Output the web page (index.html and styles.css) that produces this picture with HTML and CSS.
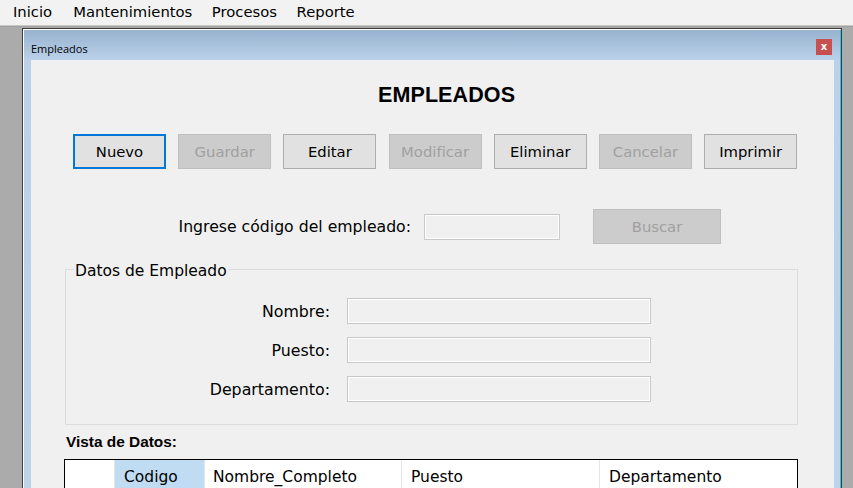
FILE: index.html
```html
<!DOCTYPE html>
<html lang="es">
<head>
<meta charset="utf-8">
<title>Empleados</title>
<link rel="stylesheet" href="styles.css">
</head>
<body>
<div class="menubar">
  <span class="menu-item m1">Inicio</span>
  <span class="menu-item m2">Mantenimientos</span>
  <span class="menu-item m3">Procesos</span>
  <span class="menu-item m4">Reporte</span>
</div>
<div class="mdi">
  <div class="window">
    <div class="frame">
      <div class="titlebar">
        <span class="title-text">Empleados</span>
        <span class="close-btn">x</span>
      </div>
      <div class="client">
        <h1 class="form-title">EMPLEADOS</h1>
        <div class="toolbar">
          <button class="btn btn-focus">Nuevo</button>
          <button class="btn btn-disabled">Guardar</button>
          <button class="btn">Editar</button>
          <button class="btn btn-disabled">Modificar</button>
          <button class="btn">Eliminar</button>
          <button class="btn btn-disabled">Cancelar</button>
          <button class="btn">Imprimir</button>
        </div>
        <div class="search-row">
          <span class="search-label">Ingrese código del empleado:</span>
          <span class="textbox search-box"></span>
          <button class="btn btn-disabled btn-search">Buscar</button>
        </div>
        <fieldset class="group">
          <legend class="group-legend">Datos de Empleado</legend>
          <div class="form-grid">
            <span class="field-label">Nombre:</span><span class="textbox field-box"></span>
            <span class="field-label">Puesto:</span><span class="textbox field-box"></span>
            <span class="field-label">Departamento:</span><span class="textbox field-box"></span>
          </div>
        </fieldset>
        <div class="section-title">Vista de Datos:</div>
        <div class="datagrid">
          <div class="hdr hdr-row"></div>
          <div class="hdr hdr-sel">Codigo</div>
          <div class="hdr hdr-name">Nombre_Completo</div>
          <div class="hdr hdr-puesto">Puesto</div>
          <div class="hdr hdr-depto">Departamento</div>
        </div>
      </div>
    </div>
  </div>
</div>
</body>
</html>
```
FILE: styles.css
```css
* { box-sizing: border-box; }
html, body { margin: 0; padding: 0; height: 100%; overflow: hidden; }
body {
  font-family: "DejaVu Sans", sans-serif;
  color: #000;
  background: #ababab;
}
.menubar {
  height: 27px;
  background: #f2f2f2;
  border-bottom: 1px solid #a0a0a0;
  box-shadow: inset 0 -1px 0 #c8c8c8;
  display: flex;
  align-items: center;
  font-size: 14.8px;
  padding-bottom: 3px;
}
.m1 { margin-left: 13px; }
.m2 { margin-left: 21px; }
.m3 { margin-left: 19.5px; }
.m4 { margin-left: 19.5px; }

.mdi {
  padding-left: 22px;
  padding-top: 1px;
  height: calc(100% - 27px);
}
.window {
  width: 820px;
  height: 100%;
  border: 1px solid #3c3c3c;
  border-bottom: none;
}
.frame {
  height: 100%;
  border-left: 1px solid #fff;
  border-top: 1px solid #fff;
  border-right: 1px solid #1ec8f0;
  background: linear-gradient(to bottom, #97b2cf 0px, #bad1e9 30px, #bcd3ea 100%);
  padding: 0 6px 0 7px;
}
.titlebar {
  height: 30px;
  display: flex;
  align-items: center;
  justify-content: space-between;
}
.title-text {
  font-family: "Open Sans", sans-serif;
  font-size: 11px;
  color: #000;
  margin-top: 6px;
}
.close-btn {
  width: 16px;
  height: 16px;
  background: #c75050;
  color: #fff;
  font-family: "DejaVu Sans", sans-serif;
  font-weight: bold;
  font-size: 10px;
  line-height: 15px;
  text-align: center;
  margin-right: 2px;
  margin-top: 3px;
}
.client {
  background: #f0f0f0;
  height: calc(100% - 30px);
  padding-top: 20px;
}
.form-title {
  margin: 0;
  font-family: "Liberation Sans", sans-serif;
  font-weight: bold;
  font-size: 21.5px;
  line-height: 30px;
  padding-left: 347px;
  letter-spacing: 0.1px;
}
.toolbar {
  display: flex;
  gap: 12.2px;
  margin-top: 24px;
  padding-left: 42px;
}
.btn {
  width: 93px;
  height: 35px;
  font-family: "DejaVu Sans", sans-serif;
  font-size: 14.8px;
  background: #e1e1e1;
  border: 1px solid #adadad;
  color: #000;
  padding: 0;
  margin: 0;
}
.btn-focus {
  border: 2px solid #0078d7;
}
.btn-disabled {
  background: #cccccc;
  border-color: #bfbfbf;
  color: #a0a0a0;
}
.search-row {
  display: grid;
  grid-template-columns: 380px 136px 128px;
  column-gap: 13px;
  align-items: center;
  margin-top: 40px;
  height: 35px;
}
.search-row .btn-search { margin-left: 20px; width: 128px; }
.search-label {
  text-align: right;
  font-size: 15.7px;
}
.textbox {
  display: block;
  height: 26px;
  border: 1px solid #c8c8c8;
  box-shadow: inset 0 0 0 1px #fff;
  background: #f0f0f0;
}
.group {
  margin: 14px 0 0 34px;
  width: 733px;
  padding: 0 0 22px 0;
  border: 1px solid #dcdcdc;
  min-inline-size: 0;
}
.group-legend {
  font-size: 15.5px;
  line-height: 18px;
  padding: 4px 1px 0 1px;
  margin-left: 8px;
}
.form-grid {
  display: grid;
  grid-template-columns: 264px 304px;
  column-gap: 17px;
  row-gap: 13px;
  padding-top: 18px;
  align-items: center;
}
.field-label {
  text-align: right;
  font-size: 15.8px;
}
.section-title {
  font-family: "Liberation Sans", sans-serif;
  font-weight: bold;
  font-size: 15.4px;
  line-height: 18px;
  margin: 8px 0 0 35px;
}
.datagrid {
  display: grid;
  grid-template-columns: 50px 90px 197px 198px 197px;
  margin: 8px 0 0 33px;
  width: 734px;
  border: 1px solid #000;
  background: #fff;
}
.hdr {
  height: 32px;
  font-size: 15.5px;
  line-height: 30px;
  padding: 2px 0 0 9px;
  border-right: 1px solid #e5e5e5;
  background: #fff;
  white-space: nowrap;
  overflow: hidden;
}
.hdr-sel { background: #bfdcf3; }
.hdr-name { padding-left: 8px; }
.hdr-depto { border-right: none; }
```
